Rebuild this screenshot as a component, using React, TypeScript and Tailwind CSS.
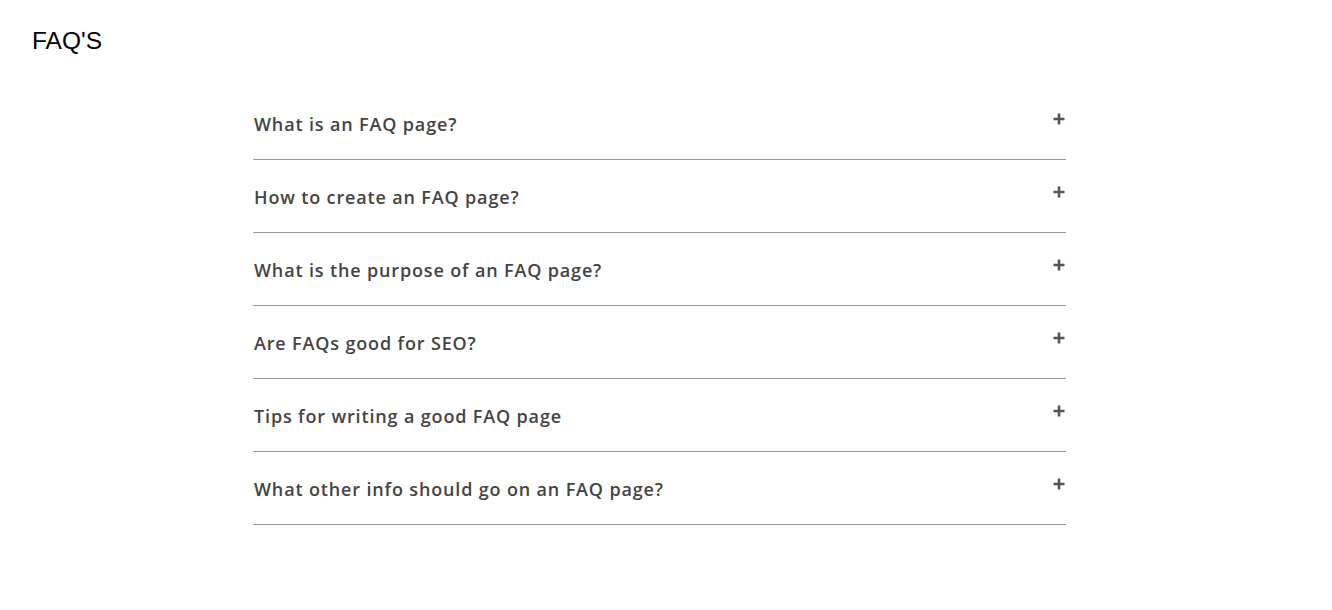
const questions = [
  "What is an FAQ page?",
  "How to create an FAQ page?",
  "What is the purpose of an FAQ page?",
  "Are FAQs good for SEO?",
  "Tips for writing a good FAQ page",
  "What other info should go on an FAQ page?",
];

function PlusIcon() {
  return (
    <svg width="12" height="12" viewBox="0 0 12 12" className="text-[#555]">
      <path d="M6 0.5v11M0.5 6h11" stroke="currentColor" strokeWidth="2.6" />
    </svg>
  );
}

export default function App() {
  return (
    <div className="min-h-[610px] bg-white">
      <h1 className="pl-8 pt-[26px] text-[24.5px] leading-[30px] text-black font-['Liberation_Sans',Arial,sans-serif]">
        FAQ'S
      </h1>
      <div className="ml-[253px] mt-[31px] w-[813px]">
        {questions.map((q) => (
          <div
            key={q}
            className="flex h-[73px] items-start justify-between border-b border-[#9a9a9a]"
          >
            <span className="pl-[1px] pt-[24px] text-[18px] leading-[26px] tracking-[0.85px] text-[#444] font-['Open_Sans',sans-serif] font-semibold">
              {q}
            </span>
            <span className="pr-[1px] pt-[26px]">
              <PlusIcon />
            </span>
          </div>
        ))}
      </div>
    </div>
  );
}
